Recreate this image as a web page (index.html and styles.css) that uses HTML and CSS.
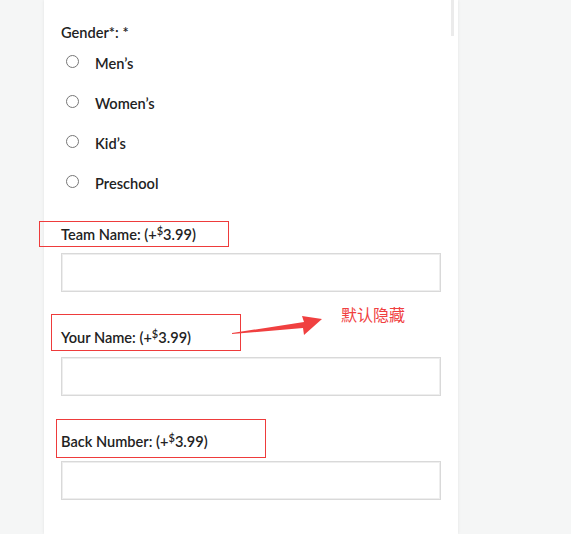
FILE: index.html
```html
<!DOCTYPE html>
<html lang="en">
<head>
  <meta charset="UTF-8">
  <title>Product Options</title>
  <link rel="stylesheet" href="styles.css">
</head>
<body>
  <div class="card">
    <div class="scrollbar"></div>

    <div class="label">Gender*: *</div>
    <div class="radio-list">
      <label class="radio-row"><input type="radio" name="gender"><span>Men’s</span></label>
      <label class="radio-row"><input type="radio" name="gender"><span>Women’s</span></label>
      <label class="radio-row"><input type="radio" name="gender"><span>Kid’s</span></label>
      <label class="radio-row"><input type="radio" name="gender"><span>Preschool</span></label>
    </div>

    <div class="field first">
      <div class="label">Team Name: (+<sup>$</sup>3.99)</div>
      <input class="text-input" type="text">
    </div>

    <div class="field">
      <div class="label">Your Name: (+<sup>$</sup>3.99)</div>
      <input class="text-input" type="text">
    </div>

    <div class="field">
      <div class="label">Back Number: (+<sup>$</sup>3.99)</div>
      <input class="text-input" type="text">
    </div>
  </div>

  <!-- annotations drawn over the screenshot -->
  <div class="note-box box-team"></div>
  <div class="note-box box-name"></div>
  <div class="note-box box-number"></div>
  <svg class="note-arrow" width="100" height="30" viewBox="0 0 100 30">
    <polygon points="0,23 72,12 70,6 90,9 72,25 71,18 0,24" fill="#f04040"/>
  </svg>
  <div class="note-text">默认隐藏</div>
</body>
</html>
```

FILE: styles.css
```css
body {
  margin: 0;
  background-color: #f5f6f6;
  font-family: Lato, "Noto Sans", sans-serif;
  color: #222;
  height: 534px;
  overflow: hidden;
}

.card {
  position: relative;
  margin-left: 44px;
  width: 414px;
  min-height: 534px;
  box-sizing: border-box;
  padding: 22px 17px 0 17px;
  background-color: #fff;
  box-shadow: 0 0 3px rgba(0, 0, 0, 0.08);
}

.scrollbar {
  position: absolute;
  top: 0;
  left: 407px;
  width: 3px;
  height: 36px;
  background-color: #ebebeb;
}

.label {
  padding-top: 1px;
  font-size: 14.6px;
  font-weight: 600;
  line-height: 20px;
}

.label sup {
  font-size: 11px;
  line-height: 0;
  vertical-align: 5px;
}

.radio-list {
  display: flex;
  flex-direction: column;
  margin-top: -1px;
}

.radio-row {
  display: flex;
  align-items: center;
  height: 40px;
  font-size: 14.6px;
  font-weight: 600;
}

.radio-row span {
  padding-top: 2px;
}

.radio-row input {
  margin: 0 16px 2px 5px;
  width: 13px;
  height: 13px;
}

.field {
  margin-top: 35px;
}

.field.first {
  margin-top: 22px;
}

.text-input {
  display: block;
  margin-top: 8px;
  width: 380px;
  height: 39px;
  box-sizing: border-box;
  border: 1px solid #d9d9d9;
  box-shadow: inset 0 0 0 1px #eeeeee;
  background: #fff;
}

.field + .field .text-input {
  margin-top: 9px;
}

.note-box {
  position: absolute;
  border: 1px solid #ee3b3b;
}

.box-team {
  left: 39px;
  top: 221px;
  width: 188px;
  height: 24px;
}

.box-name {
  left: 51px;
  top: 314px;
  width: 188px;
  height: 35px;
}

.box-number {
  left: 56px;
  top: 419px;
  width: 208px;
  height: 37px;
}

.note-arrow {
  position: absolute;
  left: 232px;
  top: 310px;
}

.note-text {
  position: absolute;
  left: 341px;
  top: 303px;
  font-family: "Noto Sans CJK SC", sans-serif;
  font-size: 16px;
  line-height: 22px;
  color: #f04040;
}
```
